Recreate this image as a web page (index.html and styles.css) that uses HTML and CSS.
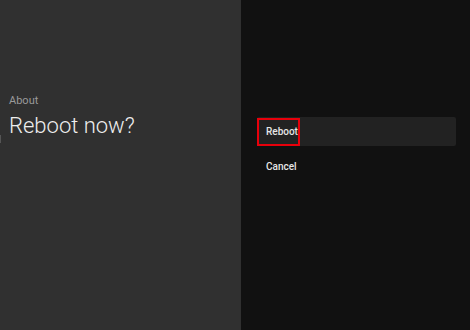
FILE: index.html
```html
<!DOCTYPE html>
<html lang="en">
<head>
  <meta charset="UTF-8">
  <link rel="stylesheet" href="styles.css">
</head>
<body>
  <div id="screen">
    <div class="guidance">
      <span class="edge"></span>
      <div class="breadcrumb">About</div>
      <div class="title">Reboot now?</div>
    </div>
    <div class="actions">
      <div class="action focused">
        <span class="label">Reboot</span>
      </div>
      <div class="action">
        <span class="label">Cancel</span>
      </div>
    </div>
  </div>
</body>
</html>
```

FILE: styles.css
```css
html, body {
  margin: 0;
  width: 470px;
  height: 330px;
  overflow: hidden;
  font-family: Roboto, "Noto Sans", sans-serif;
}

#screen {
  display: flex;
  width: 470px;
  height: 330px;
}

.guidance {
  position: relative;
  width: 232px;
  padding-left: 9px;
  padding-top: 94px;
  background-color: #303030;
}

.edge {
  position: absolute;
  left: 0;
  top: 135px;
  width: 1px;
  height: 8px;
  background-color: #555;
}

.breadcrumb {
  font-size: 11px;
  line-height: 14px;
  color: #9a9a9a;
}

.title {
  margin-top: 5px;
  font-size: 22px;
  font-weight: 300;
  line-height: 26px;
  color: #eeeeee;
}

.actions {
  flex: 1;
  display: flex;
  flex-direction: column;
  gap: 6px;
  padding: 117px 14px 0 16px;
  background-color: #111111;
}

.action {
  height: 29px;
  display: flex;
  align-items: center;
  border-radius: 2px;
}

.action.focused {
  background-color: #222222;
}

.label {
  padding-left: 9px;
  font-size: 10px;
  font-weight: 500;
  color: #e6e6e6;
}

.focused .label {
  height: 24px;
  line-height: 24px;
  width: 32px;
  border: 2px solid #e8000b;
  padding-right: 0;
  padding-left: 7px;
}
```
